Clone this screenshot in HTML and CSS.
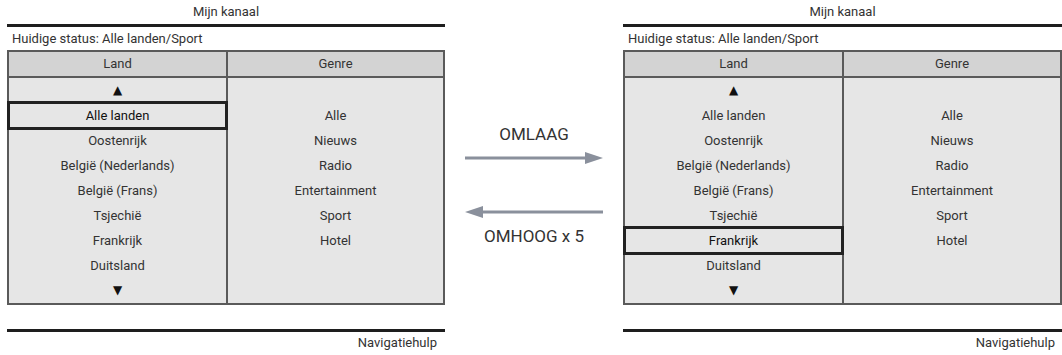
FILE: index.html
```html
<!DOCTYPE html>
<html lang="nl">
<head>
    <meta charset="UTF-8">
    <meta name="viewport" content="width=device-width, initial-scale=1.0">
    <title>Mijn kanaal</title>
    <link rel="stylesheet" href="styles.css">
</head>
<body>

<div class="page">
    <!-- Before: cursor on "Alle landen" -->
    <section class="panel">
        <div class="panel-title">Mijn kanaal</div>
        <div class="status">Huidige status: Alle landen/Sport</div>
        <div class="table">
            <div class="col land">
                <div class="head">Land</div>
                <ul class="list">
                    <li class="arrow">&#9650;</li>
                    <li class="active">Alle landen</li>
                    <li>Oostenrijk</li>
                    <li>België (Nederlands)</li>
                    <li>België (Frans)</li>
                    <li>Tsjechië</li>
                    <li>Frankrijk</li>
                    <li>Duitsland</li>
                    <li class="arrow">&#9660;</li>
                </ul>
            </div>
            <div class="col genre">
                <div class="head">Genre</div>
                <ul class="list">
                    <li>Alle</li>
                    <li>Nieuws</li>
                    <li>Radio</li>
                    <li>Entertainment</li>
                    <li>Sport</li>
                    <li>Hotel</li>
                </ul>
            </div>
        </div>
        <div class="footer">Navigatiehulp</div>
    </section>

    <div class="steps">
        <div class="step-label">OMLAAG</div>
        <svg class="step-arrow" width="138" height="14" viewBox="0 0 138 14">
            <line x1="0" y1="7" x2="122" y2="7" stroke="#8a909c" stroke-width="3"/>
            <polygon points="120,1 138,7 120,13" fill="#8a909c"/>
        </svg>
        <svg class="step-arrow back" width="138" height="14" viewBox="0 0 138 14">
            <line x1="16" y1="7" x2="138" y2="7" stroke="#8a909c" stroke-width="3"/>
            <polygon points="18,1 0,7 18,13" fill="#8a909c"/>
        </svg>
        <div class="step-label">OMHOOG x 5</div>
    </div>

    <!-- After: cursor on "Frankrijk" -->
    <section class="panel wide">
        <div class="panel-title">Mijn kanaal</div>
        <div class="status">Huidige status: Alle landen/Sport</div>
        <div class="table">
            <div class="col land">
                <div class="head">Land</div>
                <ul class="list">
                    <li class="arrow">&#9650;</li>
                    <li>Alle landen</li>
                    <li>Oostenrijk</li>
                    <li>België (Nederlands)</li>
                    <li>België (Frans)</li>
                    <li>Tsjechië</li>
                    <li class="active">Frankrijk</li>
                    <li>Duitsland</li>
                    <li class="arrow">&#9660;</li>
                </ul>
            </div>
            <div class="col genre">
                <div class="head">Genre</div>
                <ul class="list">
                    <li>Alle</li>
                    <li>Nieuws</li>
                    <li>Radio</li>
                    <li>Entertainment</li>
                    <li>Sport</li>
                    <li>Hotel</li>
                </ul>
            </div>
        </div>
        <div class="footer">Navigatiehulp</div>
    </section>
</div>

</body>
</html>
```

FILE: styles.css
```css
body {
    margin: 0;
    background-color: #fff;
    color: #333;
    font-family: Roboto, "Noto Sans", sans-serif;
    font-size: 13px;
}

.page {
    display: flex;
    padding-left: 7px;
    width: 1055px;
    height: 355px;
}

.panel {
    width: 438px;
    display: flex;
    flex-direction: column;
}

.panel.wide {
    width: 439px;
}

.panel-title {
    height: 24px;
    line-height: 24px;
    text-align: center;
    border-bottom: 3px solid #1e1e1e;
}

.status {
    height: 23px;
    line-height: 23px;
    padding-left: 5px;
}

.table {
    display: flex;
    border: 2px solid #5a5a5a;
    background-color: #e6e6e6;
}

.col.land {
    width: 217px;
    border-right: 2px solid #5a5a5a;
}

.col.genre {
    flex: 1;
}

.head {
    height: 24px;
    line-height: 24px;
    text-align: center;
    background-color: #d3d3d3;
    border-bottom: 2px solid #5a5a5a;
}

.list {
    list-style: none;
    margin: 0;
    padding: 0;
}

.list li {
    height: 25px;
    line-height: 25px;
    text-align: center;
}

.list li.arrow {
    font-family: "DejaVu Sans", sans-serif;
    font-size: 12px;
    color: #111;
}

.list li.active {
    color: #111;
    outline: 3px solid #222;
    outline-offset: -1px;
}

.genre .list {
    padding-top: 25px;
}

.footer {
    margin-top: 24px;
    border-top: 3px solid #1e1e1e;
    height: 22px;
    line-height: 22px;
    text-align: right;
    padding-right: 8px;
}

.panel.wide .footer {
    padding-right: 7px;
}

/* middle column with the key presses */
.steps {
    width: 178px;
    display: flex;
    flex-direction: column;
    align-items: center;
    padding-top: 124px;
}

.step-label {
    height: 20px;
    line-height: 20px;
    font-size: 17px;
    color: #333;
}

.step-arrow {
    display: block;
    margin-top: 7px;
}

.step-arrow.back {
    margin-top: 40px;
    margin-bottom: 7px;
}
```
